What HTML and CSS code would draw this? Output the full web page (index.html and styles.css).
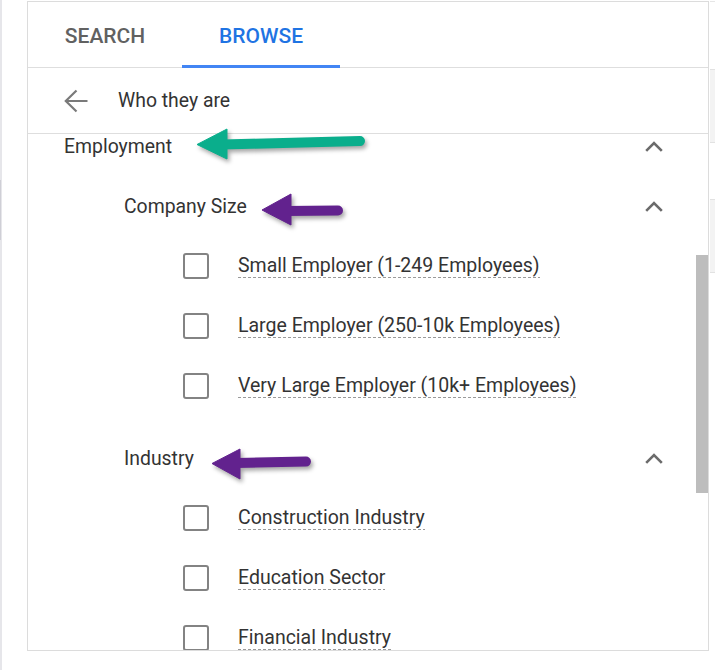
FILE: index.html
```html
<!DOCTYPE html>
<html>
<head>
<meta charset="utf-8">
<link rel="stylesheet" href="styles.css">
</head>
<body>
<div class="page">
  <div class="edge-left"><div class="edge-mark"></div></div>
  <div class="panel">
    <div class="tabs">
      <div class="tab">SEARCH</div>
      <div class="tab active">BROWSE</div>
    </div>
    <div class="crumb">
      <svg class="back" width="24" height="24" viewBox="0 0 24 24"><path d="M23.5 12H2.5M12.5 1.5L1.8 12l10.7 10.5" fill="none" stroke="#7a7a7a" stroke-width="2.2"/></svg>
      <span>Who they are</span>
    </div>
    <div class="content">
      <div class="list">
        <div class="row lvl1"><span>Employment</span><svg class="chev" width="18" height="11" viewBox="0 0 18 11"><path d="M1.2 9.8L9 2l7.8 7.8" fill="none" stroke="#6b6b6b" stroke-width="2.6"/></svg></div>
        <div class="row lvl2"><span>Company Size</span><svg class="chev" width="18" height="11" viewBox="0 0 18 11"><path d="M1.2 9.8L9 2l7.8 7.8" fill="none" stroke="#6b6b6b" stroke-width="2.6"/></svg></div>
        <div class="row opt"><span class="box"></span><span class="label">Small Employer (1-249 Employees)</span></div>
        <div class="row opt"><span class="box"></span><span class="label">Large Employer (250-10k Employees)</span></div>
        <div class="row opt"><span class="box"></span><span class="label">Very Large Employer (10k+ Employees)</span></div>
        <div class="row lvl2 group"><span>Industry</span><svg class="chev" width="18" height="11" viewBox="0 0 18 11"><path d="M1.2 9.8L9 2l7.8 7.8" fill="none" stroke="#6b6b6b" stroke-width="2.6"/></svg></div>
        <div class="row opt"><span class="box"></span><span class="label">Construction Industry</span></div>
        <div class="row opt"><span class="box"></span><span class="label">Education Sector</span></div>
        <div class="row opt"><span class="box"></span><span class="label">Financial Industry</span></div>
      </div>
      <div class="track"><div class="thumb"></div></div>
    </div>
  </div>
  <div class="edge-right">
    <div class="er-top"></div>
    <div class="er-block"></div>
    <div class="er-gap"></div>
    <div class="er-block"></div>
  </div>
  <svg class="annot" width="715" height="670" viewBox="0 0 715 670">
    <g class="shadow">
      <g fill="#0aae8c" stroke="#0aae8c">
        <path d="M222 144.5L360 141" stroke-width="10" stroke-linecap="round"/>
        <path d="M197 144.5L227 129L227 159Z" stroke-width="1" stroke-linejoin="round"/>
      </g>
      <g fill="#62228e" stroke="#62228e">
        <path d="M286 211L338 210.5" stroke-width="10" stroke-linecap="round"/>
        <path d="M262 210L291 194L291 225Z" stroke-width="1" stroke-linejoin="round"/>
      </g>
      <g fill="#62228e" stroke="#62228e">
        <path d="M236 463L306 461.5" stroke-width="10" stroke-linecap="round"/>
        <path d="M212 463.5L240 449L240 479Z" stroke-width="1" stroke-linejoin="round"/>
      </g>
    </g>
  </svg>
</div>
</body>
</html>
```
FILE: styles.css
```css
* { box-sizing: border-box; }
html, body { margin: 0; padding: 0; background: #fff; }
body { font-family: Roboto, "Liberation Sans", sans-serif; color: #333; }

.page {
  position: relative;
  width: 715px;
  height: 670px;
  display: flex;
  overflow: hidden;
}

.edge-left {
  width: 2px;
  height: 670px;
  background: #e6e6ea;
  margin-right: 25px;
  padding-top: 180px;
}
.edge-mark { width: 1px; height: 60px; background: #cfcfd6; }

.panel {
  width: 682px;
  height: 650px;
  margin-top: 1px;
  border: 1px solid #dcdcdc;
  display: flex;
  flex-direction: column;
  background: #fff;
}

.tabs {
  display: flex;
  height: 66px;
  border-bottom: 1px solid #dedede;
  flex: none;
}
.tab {
  width: 154px;
  height: 65px;
  display: flex;
  align-items: center;
  justify-content: center;
  font-size: 21px;
  font-weight: 500;
  color: #616161;
  padding-top: 2px;
}
.tab.active {
  width: 158px;
  height: 66px;
  color: #1f74e3;
  border-bottom: 3px solid #4285f4;
  margin-bottom: -1px;
  padding-top: 5px;
}

.crumb {
  height: 66px;
  flex: none;
  border-bottom: 1px solid #dedede;
  display: flex;
  align-items: center;
  padding-left: 36px;
  gap: 30px;
  font-size: 19.4px;
  color: #333;
}
.back { display: block; }

.content {
  flex: 1;
  display: flex;
  overflow: hidden;
}
.list {
  flex: 1;
  margin-top: -18px;
}
.row {
  height: 60px;
  display: flex;
  align-items: center;
  padding-right: 33px;
  font-size: 19.4px;
  color: #333;
}
.row .chev { margin-left: auto; display: block; }
.lvl1 { padding-left: 36px; }
.lvl2 { padding-left: 96px; }
.group { margin-top: 12px; }
.opt { padding-left: 155px; }

.box {
  width: 26px;
  height: 26px;
  border: 2.6px solid #838383;
  border-radius: 3px;
  flex: none;
  margin-right: 29px;
}
.label {
  font-size: 19.5px;
  line-height: 22px;
  padding-bottom: 1px;
  background: repeating-linear-gradient(to right, #9a9a9a 0 3px, transparent 3px 5px) left bottom / 100% 1px no-repeat;
}

.track {
  width: 12px;
  flex: none;
  padding-top: 121px;
}
.thumb {
  width: 12px;
  height: 238px;
  background: #bdbdbd;
}

.edge-right {
  flex: 1;
  display: flex;
  flex-direction: column;
  margin-left: 1px;
}
.er-top { height: 68px; border-top: 1px solid #e6e6e6; margin-top: 1px; }
.er-block { height: 74px; background: #f3f3f3; border-top: 1px solid #e2e2e2; border-bottom: 1px solid #e2e2e2; }
.er-gap { height: 56px; }

.annot {
  position: absolute;
  left: 0;
  top: 0;
  pointer-events: none;
}
.shadow { filter: drop-shadow(2px 3px 2px rgba(0,0,0,0.35)); }
```
